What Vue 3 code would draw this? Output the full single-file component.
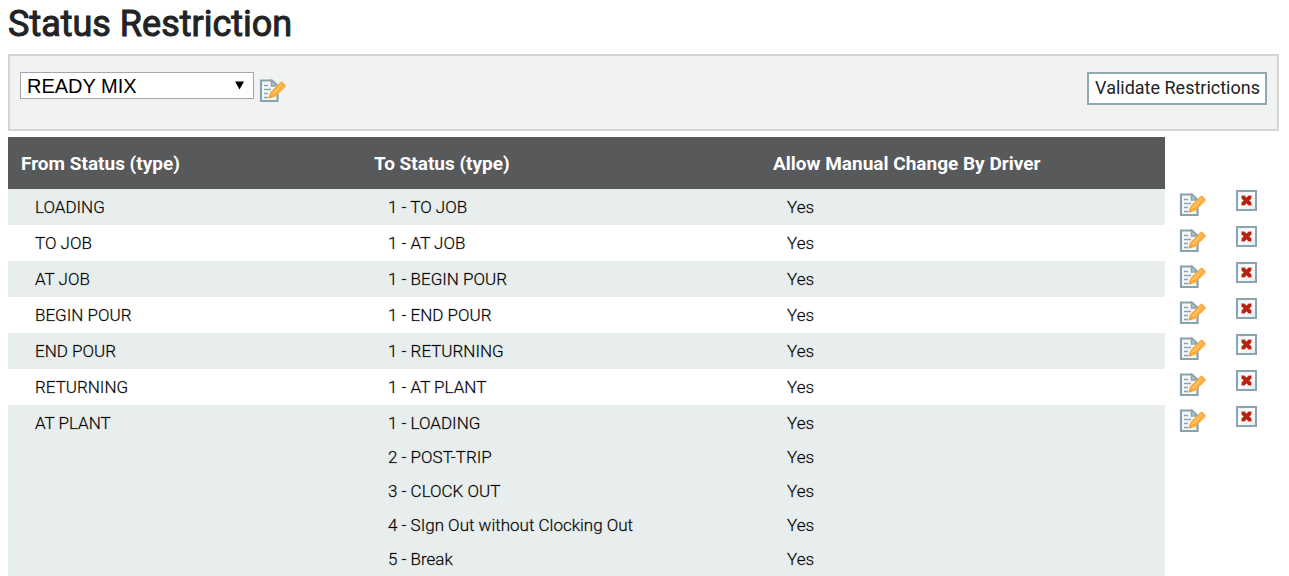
<script setup>
import { ref } from 'vue'

const plant = ref('READY MIX')
const rows = [
  { from: 'LOADING', to: ['1 - TO JOB'] },
  { from: 'TO JOB', to: ['1 - AT JOB'] },
  { from: 'AT JOB', to: ['1 - BEGIN POUR'] },
  { from: 'BEGIN POUR', to: ['1 - END POUR'] },
  { from: 'END POUR', to: ['1 - RETURNING'] },
  { from: 'RETURNING', to: ['1 - AT PLANT'] },
  {
    from: 'AT PLANT',
    to: ['1 - LOADING', '2 - POST-TRIP', '3 - CLOCK OUT', '4 - SIgn Out without Clocking Out', '5 - Break'],
  },
]
</script>

<template>
  <svg class="defs" aria-hidden="true">
    <defs>
      <linearGradient id="tile" x1="0" y1="0" x2="1" y2="1">
        <stop offset="0" stop-color="#e2f0f6" />
        <stop offset=".5" stop-color="#ffffff" />
        <stop offset="1" stop-color="#d8e8ef" />
      </linearGradient>
    </defs>
    <symbol id="edit" viewBox="0 0 28 28">
      <path d="M2 4.500H13L18.500 10V25H2Z" fill="#f4f8f9" stroke="#8aa2ab" stroke-width="2.200" />
      <path d="M12.500 4.500V10H18.500Z" fill="#b9c9cf" stroke="#8aa2ab" stroke-width="1.500" />
      <path d="M5 9.500H9M5 13.500H12M5 17.500H9M5 21.500H9" stroke="#8aa2ab" stroke-width="1.600" />
      <path d="M9.500 22.500L11 16.500L21.500 6Q22.500 5 23.500 6L26.500 9Q27.300 10 26.500 11L16 21Z" fill="#fbae3f" />
      <path d="M14 18L21 11" stroke="#ffd79a" stroke-width="1.500" stroke-dasharray="2 1" />
      <path d="M20.500 8L24.500 12" stroke="#fdcb80" stroke-width="1" />
      <path d="M9.500 22.500L10.500 19L13 21.500Z" fill="#f5982c" />
    </symbol>
    <symbol id="remove" viewBox="0 0 21 21">
      <rect x="1" y="1" width="19" height="19" fill="url(#tile)" stroke="#8ba5af" stroke-width="2" />
      <path d="M5.500 5.500H8.500L10.500 7.500L12.500 5.500H15.500V8.500L13.500 10.500L15.500 12.500V15.500H12.500L10.500 13.500L8.500 15.500H5.500V12.500L7.500 10.500L5.500 8.500Z" fill="#b8230f" stroke="#e0aaa1" stroke-width=".5" />
    </symbol>
  </svg>

  <main class="page">
    <h1>Status Restriction</h1>

    <section class="toolbar">
      <div class="picker">
        <div class="select-wrap">
          <select v-model="plant" aria-label="Product line">
            <option>READY MIX</option>
          </select>
          <svg class="arrow" viewBox="0 0 10 9" aria-hidden="true"><path d="M0 0H10L5 9Z" /></svg>
        </div>
        <button class="icon-btn" type="button" aria-label="Edit product line">
          <svg class="edit"><use href="#edit" /></svg>
        </button>
      </div>
      <button class="validate" type="button">Validate Restrictions</button>
    </section>

    <table>
      <colgroup>
        <col class="c-from" /><col class="c-to" /><col class="c-allow" /><col class="c-edit" /><col class="c-remove" />
      </colgroup>
      <thead>
        <tr>
          <th scope="col">From Status (type)</th>
          <th scope="col">To Status (type)</th>
          <th scope="col">Allow Manual Change By Driver</th>
          <td class="action"></td>
          <td class="action"></td>
        </tr>
      </thead>
      <tbody>
        <tr v-for="row in rows" :key="row.from">
          <td>{{ row.from }}</td>
          <td><div v-for="t in row.to" :key="t">{{ t }}</div></td>
          <td><div v-for="t in row.to" :key="t">Yes</div></td>
          <td class="action">
            <button class="icon-btn" type="button" :aria-label="'Edit ' + row.from">
              <svg class="edit"><use href="#edit" /></svg>
            </button>
          </td>
          <td class="action">
            <button class="icon-btn" type="button" :aria-label="'Delete ' + row.from">
              <svg class="remove"><use href="#remove" /></svg>
            </button>
          </td>
        </tr>
      </tbody>
    </table>
  </main>
</template>

<style>
html {
  overflow: hidden;
  background: #fff;
}
</style>

<style scoped>
.defs {
  position: absolute;
  width: 0;
  height: 0;
}
.page {
  padding: 0 10px 0 8px;
  font-family: Roboto, "Liberation Sans", sans-serif;
  font-size: 17px;
  font-weight: 300;
  color: #000;
}
h1 {
  margin: 0;
  padding: 2px 0 8px;
  font-size: 36px;
  line-height: 44px;
  font-weight: 400;
  color: #212324;
  -webkit-text-stroke: 1px #212324;
}
.toolbar {
  display: flex;
  justify-content: space-between;
  align-items: flex-start;
  padding: 16px 10px 24px;
  background: #f0f3f2;
  border: 2px solid #d4d6d6;
}
.picker {
  display: flex;
  align-items: flex-start;
  gap: 5px;
}
.picker .icon-btn {
  margin-top: 4px;
}
.select-wrap {
  position: relative;
}
select {
  appearance: none;
  display: block;
  width: 234px;
  height: 27px;
  padding: 0 24px 0 6px;
  border: 1px solid #a6a6a6;
  border-radius: 0;
  background: #fff;
  color: #000;
  font-family: "Liberation Sans", Arial, sans-serif;
  font-size: 20px;
}
.arrow {
  position: absolute;
  right: 10px;
  top: 9px;
  width: 9px;
  height: 9px;
  pointer-events: none;
}
.validate {
  padding: 0 5px 2px 6px;
  border: 2px solid #90a9b1;
  background: #fff;
  color: #212324;
  font-family: inherit;
  font-size: 18px;
  line-height: 27px;
}
.icon-btn {
  display: block;
  padding: 0;
  border: 0;
  background: none;
}
.icon-btn svg {
  display: block;
}
.edit {
  width: 28px;
  height: 28px;
}
.remove {
  width: 21px;
  height: 21px;
}
table {
  width: 100%;
  margin-top: 6px;
  border-collapse: collapse;
  table-layout: fixed;
}
.c-from {
  width: 353px;
}
.c-to {
  width: 399px;
}
.c-edit {
  width: 57px;
}
.c-remove {
  width: 57px;
}
th {
  padding: 0 13px;
  height: 52px;
  background: #58595b;
  color: #fff;
  font-size: 19px;
  font-weight: 700;
  text-align: left;
}
td {
  padding: 1px 0 1px 27px;
  line-height: 34px;
  vertical-align: top;
  -webkit-text-stroke: 1px rgba(0, 0, 0, 0.2);
}
tbody tr:nth-child(odd) td {
  background: #e8eeed;
}
tbody tr td.action {
  padding: 1px 0 0 14px;
  background: none;
}
</style>
